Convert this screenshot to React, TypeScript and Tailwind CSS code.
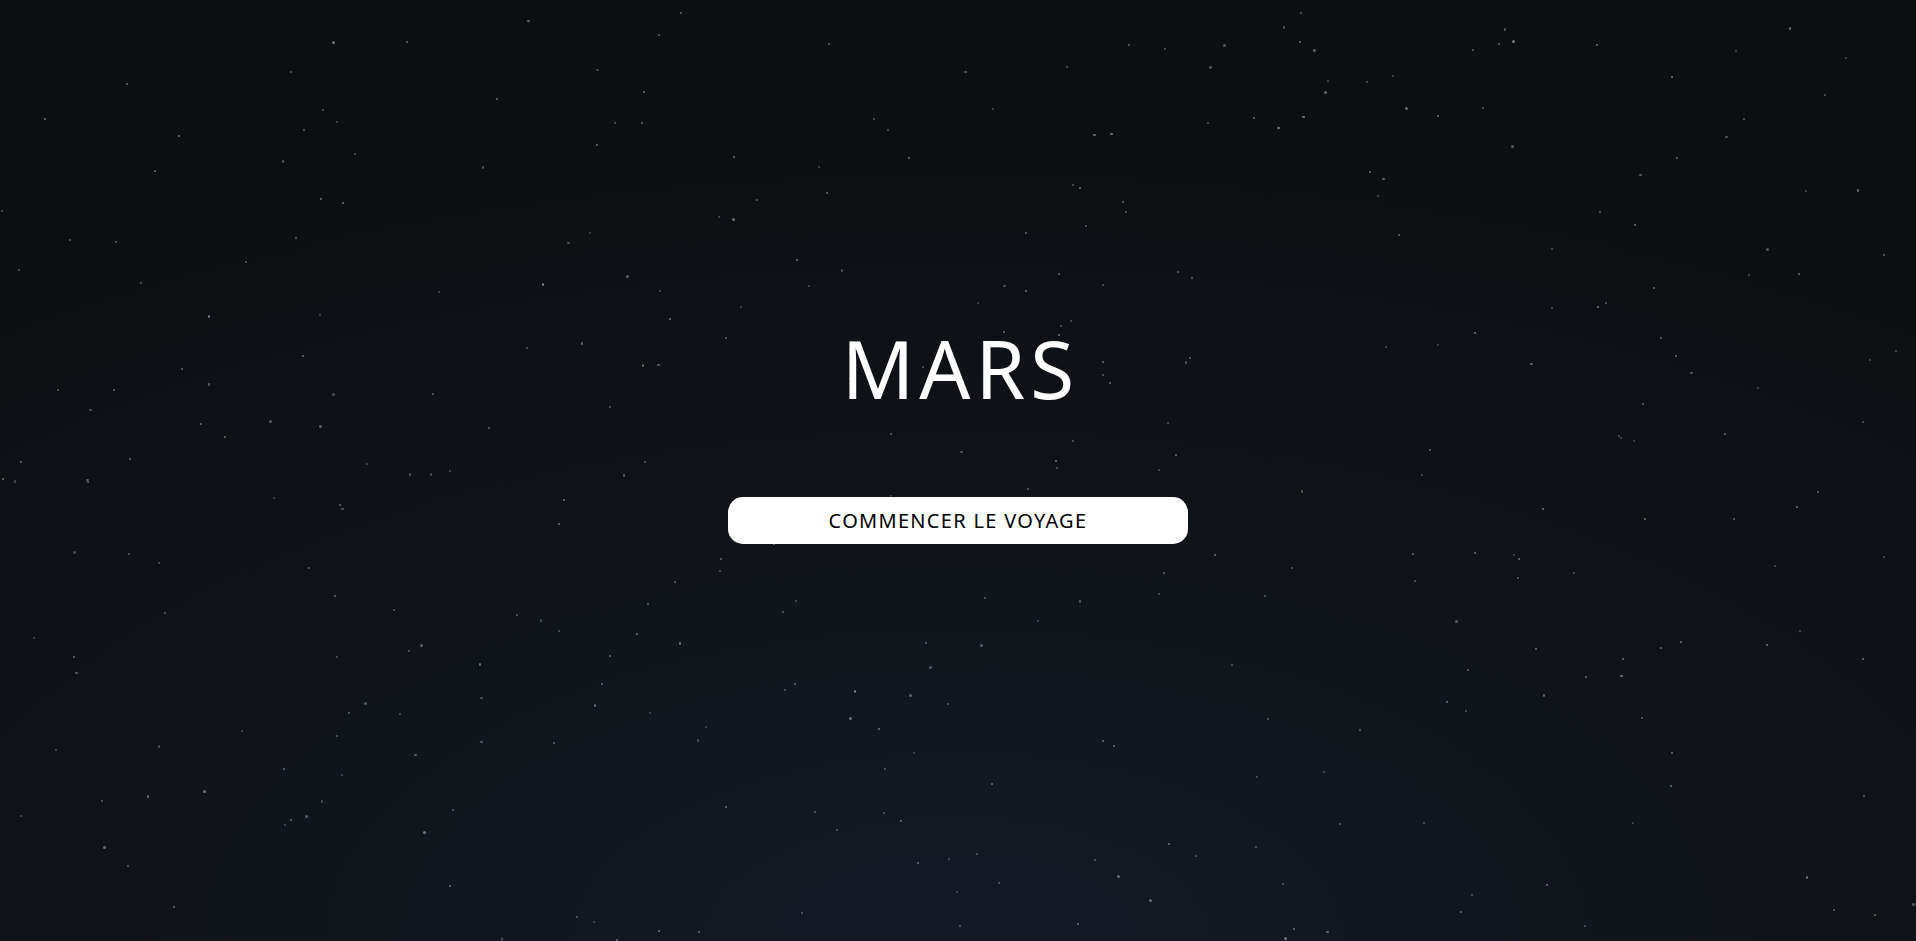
import React from "react";

type Star = { x: number; y: number; s: number; o: number };

// petit générateur déterministe pour que les étoiles restent à la même place
const makeStars = (count: number): Star[] => {
    let seed = 1337;
    const rand = () => {
        seed = (seed * 16807) % 2147483647;
        return (seed - 1) / 2147483646;
    };
    const stars: Star[] = [];
    for (let i = 0; i < count; i++) {
        stars.push({
            x: rand() * 100,
            y: rand() * 100,
            s: rand() > 0.6 ? 2.5 : 2,
            o: 0.5 + rand() * 0.4,
        });
    }
    return stars;
};

const stars = makeStars(360);

const App = () => {
    return (
        <div className="relative w-full h-[941px] overflow-hidden bg-[radial-gradient(ellipse_90%_90%_at_50%_100%,#141a24_0%,#0f1318_55%,#0c0e11_100%)]">
            <div className="absolute inset-0 pointer-events-none">
                {stars.map((st, i) => (
                    <span
                        key={i}
                        className="absolute rounded-full bg-[#80868e]"
                        style={{ left: `${st.x}%`, top: `${st.y}%`, width: st.s, height: st.s, opacity: st.o }}
                    />
                ))}
            </div>
            <div className="relative flex flex-col items-center pt-[328px]" style={{ fontFamily: '"Noto Sans", "Open Sans", sans-serif' }}>
                <h1 className="text-white text-[80px] leading-none font-normal tracking-[5px] pl-[5px]">MARS</h1>
                <button className="mt-[89px] w-[460px] h-[47px] bg-white rounded-[15px] text-black text-[20px] font-normal tracking-[1.3px]">
                    COMMENCER LE VOYAGE
                </button>
            </div>
        </div>
    );
};

export default App;
